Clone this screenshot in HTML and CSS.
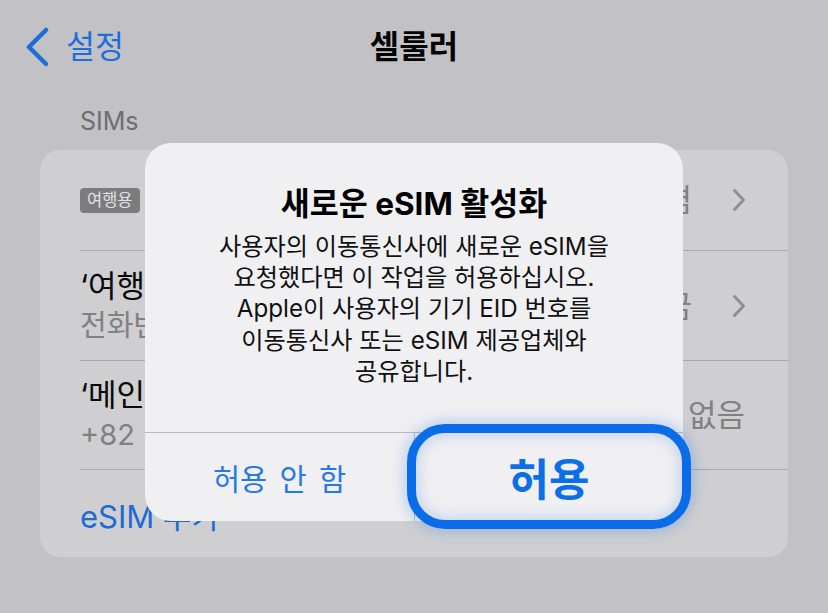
FILE: index.html
```html
<!DOCTYPE html>
<html lang="ko">
<head>
<meta charset="utf-8">
<title>셀룰러</title>
<link rel="stylesheet" href="styles.css">
</head>
<body>
<div class="screen">
  <header class="nav">
    <div class="back">
      <svg class="back-chev" width="25" height="40" viewBox="0 0 25 40"><polyline points="21,3 4,20 21,37" fill="none" stroke="#1d6fd8" stroke-width="4.5" stroke-linecap="round" stroke-linejoin="round"/></svg>
      <span>설정</span>
    </div>
    <h1 class="title">셀룰러</h1>
    <div></div>
  </header>

  <div class="section-label">SIMs</div>

  <div class="card">
    <div class="row row-1">
      <span class="badge">여행용</span>
      <div class="right">
        <span class="value">켬</span>
        <svg class="chev" width="14" height="24" viewBox="0 0 14 24"><polyline points="2.5,2.5 11.5,12 2.5,21.5" fill="none" stroke="#8e8e93" stroke-width="3" stroke-linecap="round" stroke-linejoin="round"/></svg>
      </div>
    </div>
    <div class="row row-2">
      <div class="lines">
        <div class="main">‘여행용’ 회선</div>
        <div class="sub">전화번호 없음</div>
      </div>
      <div class="right">
        <span class="value">끔</span>
        <svg class="chev" width="14" height="24" viewBox="0 0 14 24"><polyline points="2.5,2.5 11.5,12 2.5,21.5" fill="none" stroke="#8e8e93" stroke-width="3" stroke-linecap="round" stroke-linejoin="round"/></svg>
      </div>
    </div>
    <div class="row row-3">
      <div class="lines">
        <div class="main">‘메인’ 회선</div>
        <div class="sub sub-num">+82 10-1234-5678</div>
      </div>
      <div class="right">
        <span class="value">없음</span>
      </div>
    </div>
    <div class="row row-4">
      <span class="link">eSIM 추가</span>
    </div>
  </div>

  <div class="alert">
    <div class="alert-body">
      <div class="alert-title">새로운 eSIM 활성화</div>
      <div class="alert-msg">사용자의 이동통신사에 새로운 eSIM을<br>요청했다면 이 작업을 허용하십시오.<br>Apple이 사용자의 기기 EID 번호를<br>이동통신사 또는 eSIM 제공업체와<br>공유합니다.</div>
    </div>
    <div class="alert-actions">
      <div class="btn btn-deny">허용 안 함</div>
      <div class="btn btn-allow">허용</div>
    </div>
  </div>
</div>
</body>
</html>
```

FILE: styles.css
```css
html, body {
  margin: 0;
  padding: 0;
}
body {
  background: #c2c1c6;
  font-family: "Inter", "Noto Sans CJK KR", sans-serif;
  width: 828px;
  height: 613px;
  overflow: hidden;
}
.screen {
  position: relative;
  height: 613px;
}

/* nav */
.nav {
  display: grid;
  grid-template-columns: 1fr auto 1fr;
  align-items: center;
  height: 56px;
  padding-top: 19px;
}
.back {
  display: flex;
  align-items: center;
  gap: 16px;
  padding-left: 25px;
  color: #1d6fd8;
  font-size: 31.5px;
  line-height: 40px;
}
.back-chev {
  display: block;
}
.title {
  margin: 0;
  font-size: 32px;
  font-weight: 700;
  line-height: 40px;
  color: #050505;
}

.section-label {
  margin-top: 31px;
  padding-left: 80px;
  font-size: 25px;
  line-height: 30px;
  color: #6e6e73;
}

/* card */
.card {
  margin: 14px 40px 0;
  background: #cfcfd1;
  border-radius: 20px;
  overflow: hidden;
}
.row {
  box-sizing: border-box;
  margin-left: 40px;
  padding-right: 42px;
  display: flex;
  align-items: center;
  justify-content: space-between;
}
.row + .row {
  border-top: 1px solid #a9a9ad;
}
.row-1 { height: 100px; }
.row-2 { height: 110px; }
.row-3 { height: 109px; padding-right: 43px; }
.row-4 { height: 88px; padding-top: 6px; }

.badge {
  background: #7b7b80;
  color: #e2e2e4;
  font-size: 16.5px;
  line-height: 25px;
  padding: 0 7px;
  border-radius: 4px;
}
.lines {
  display: flex;
  flex-direction: column;
}
.main {
  font-size: 31px;
  line-height: 40px;
  color: #0a0a0a;
}
.sub {
  font-size: 29px;
  line-height: 40px;
  color: #808085;
}
.sub-num {
  word-spacing: 8px;
}
.right {
  display: flex;
  align-items: center;
  gap: 40px;
}
.value {
  font-size: 31px;
  line-height: 36px;
  color: #808085;
}
.chev {
  display: block;
}
.link {
  font-size: 31px;
  line-height: 40px;
  color: #1c6bd6;
}

/* alert */
.alert {
  position: absolute;
  left: 145px;
  top: 143px;
  width: 538px;
  background: #f0f0f2;
  border-radius: 26px;
}
.alert-body {
  padding: 42px 0 45px;
  text-align: center;
}
.alert-title {
  font-size: 31.5px;
  font-weight: 700;
  line-height: 37px;
  color: #000;
  white-space: nowrap;
}
.alert-msg {
  margin-top: 9px;
  font-size: 24.2px;
  line-height: 31.2px;
  color: #111;
  white-space: nowrap;
}
.alert-actions {
  display: grid;
  grid-template-columns: 269px 269px;
  border-top: 1px solid #b9b9bd;
  height: 88px;
}
.btn {
  display: flex;
  align-items: center;
  justify-content: center;
}
.btn-deny {
  font-size: 29.5px;
  word-spacing: 4px;
  color: #2479e6;
  border-bottom-left-radius: 26px;
}
.btn-allow {
  position: relative;
  border-left: 1px solid #b9b9bd;
  font-size: 44px;
  font-weight: 700;
  color: #0d6fe8;
}
.btn-allow::after {
  content: "";
  position: absolute;
  left: -8px;
  right: -8px;
  top: -9px;
  bottom: -8px;
  border: 9px solid #0a6ce9;
  border-radius: 38px;
  box-shadow: 0 0 14px 3px rgba(40, 115, 230, 0.28), inset 0 0 14px 3px rgba(40, 115, 230, 0.22);
}
```
